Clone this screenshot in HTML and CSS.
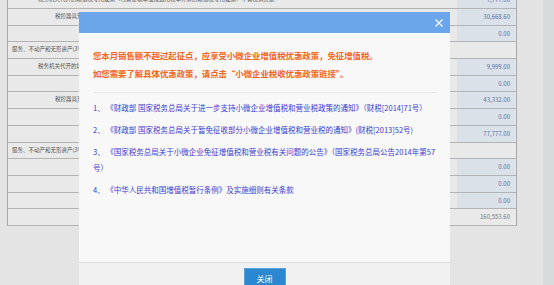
FILE: index.html
```html
<!DOCTYPE html>
<html lang="zh-CN">
<head>
    <meta charset="UTF-8">
    <title>小微企业优惠提示</title>
    <link rel="stylesheet" href="styles.css">
</head>
<body>

<div class="page">
    <div class="form-area">
        <div class="sheet">
            <div class="row"><div class="label wide lv2">税务机关代开的增值税专用发票（包含征收率或按适用税率计算的增值税专用发票）不含税销售额</div><div class="value"><span>7,777.00</span></div></div>
            <div class="row"><div class="label lv3">税控器具开具的普通发票不含税销售额</div><div class="value"><span>30,668.60</span></div></div>
            <div class="row"><div class="label"></div><div class="value"><span>0.00</span></div></div>
            <div class="row"><div class="label lv1">服务、不动产和无形资产(3%征收率)</div><div class="value empty"></div></div>
            <div class="row"><div class="label lv2">税务机关代开的增值税专用发票不含税销售额</div><div class="value"><span>9,999.00</span></div></div>
            <div class="row"><div class="label"></div><div class="value"><span>0.00</span></div></div>
            <div class="row"><div class="label lv3">税控器具开具的普通发票不含税销售额</div><div class="value"><span>43,332.00</span></div></div>
            <div class="row"><div class="label"></div><div class="value"><span>0.00</span></div></div>
            <div class="row"><div class="label"></div><div class="value"><span>77,777.00</span></div></div>
            <div class="row"><div class="label lv1">服务、不动产和无形资产(3%征收率)</div><div class="value empty"></div></div>
            <div class="row"><div class="label"></div><div class="value"><span>0.00</span></div></div>
            <div class="row"><div class="label"></div><div class="value"><span>0.00</span></div></div>
            <div class="row"><div class="label"></div><div class="value"><span>0.00</span></div></div>
            <div class="row total"><div class="label"></div><div class="value empty">160,553.60</div></div>
        </div>
    </div>
    <div class="side"></div>
    <div class="scrollbar"></div>
</div>

<!-- 提示弹窗 -->
<div class="dialog">
    <div class="dialog-head">
        <span class="dialog-close">
            <svg width="8" height="8" viewBox="0 0 8 8"><path d="M0.5 0.5 L7.5 7.5 M7.5 0.5 L0.5 7.5" stroke="#fff" stroke-width="1.1" fill="none"/></svg>
        </span>
    </div>
    <div class="dialog-body">
        <p class="notice">您本月销售额不超过起征点，应享受小微企业增值税优惠政策，免征增值税。</p>
        <p class="notice">如您需要了解具体优惠政策，请点击“小微企业税收优惠政策链接”。</p>
        <div class="divider"></div>
        <ul class="links">
            <li>1、 《财政部 国家税务总局关于进一步支持小微企业增值税和营业税政策的通知》（财税[2014]71号）</li>
            <li>2、 《财政部 国家税务总局关于暂免征收部分小微企业增值税和营业税的通知》(财税[2013]52号)</li>
            <li>3、 《国家税务总局关于小微企业免征增值税和营业税有关问题的公告》（国家税务总局公告2014年第57<br>号）</li>
            <li>4、 《中华人民共和国增值税暂行条例》及实施细则有关条款</li>
        </ul>
    </div>
    <div class="dialog-foot">
        <button class="btn-close">关闭</button>
    </div>
</div>

</body>
</html>
```

FILE: styles.css
```css
body {
    margin: 0;
    padding: 0;
    width: 554px;
    height: 285px;
    overflow: hidden;
    background-color: #e4e4e4;
    font-family: "Noto Sans CJK SC", "Liberation Sans", sans-serif;
}

.page {
    display: flex;
    height: 285px;
}

.form-area {
    width: 510px;
    margin-left: 7px;
}

.sheet {
    margin-top: -7.7px;
    border-left: 1px solid #a9a9a9;
    border-right: 1px solid #a9a9a9;
    background-color: #e9e9e9;
}

.row {
    display: flex;
    height: 16.7px;
    box-sizing: border-box;
    border-bottom: 1px solid #b3b3b3;
}

/* 标签列在弹窗下方被遮住，只保留可见部分 */
.label {
    width: 71px;
    box-sizing: border-box;
    flex-shrink: 0;
    font-size: 5.5px;
    line-height: 15.7px;
    color: #555;
    white-space: nowrap;
    overflow: hidden;
}

.label.wide {
    width: auto;
    flex-shrink: 1;
}

.lv1 {
    padding-left: 4px;
}

.lv2 {
    padding-left: 30px;
}

.lv3 {
    padding-left: 47px;
}

.value {
    width: 67px;
    margin-left: auto;
    flex-shrink: 0;
    padding: 0 1px 0 8px;
    box-sizing: border-box;
    display: flex;
}

.value span {
    flex-grow: 1;
    background-color: #dbe1e8;
    font-size: 6px;
    line-height: 15.7px;
    text-align: right;
    padding-right: 5px;
    color: #5470ad;
}

.value.empty {
    display: block;
    font-size: 6px;
    line-height: 15.7px;
    text-align: right;
    padding-right: 6px;
    color: #777;
}

.side {
    width: 26px;
    background-color: #e3e3e3;
}

.scrollbar {
    flex-grow: 1;
    background-color: #d7dbdb;
}

/* 弹窗 */
.dialog {
    position: absolute;
    left: 79px;
    top: 12px;
    width: 371px;
    background-color: #f8f8f8;
}

.dialog-head {
    height: 21px;
    background-color: #6ca6ea;
    display: flex;
    justify-content: flex-end;
    align-items: center;
    padding-right: 7px;
}

.dialog-close {
    display: flex;
}

.dialog-body {
    height: 229px;
    box-sizing: border-box;
    padding: 13px 13px 0 14px;
}

.notice {
    margin: 0;
    font-size: 8.4px;
    font-weight: bold;
    line-height: 18px;
    color: #f4651c;
}

.divider {
    margin-top: 10px;
    border-top: 1px solid #ebebeb;
}

.links {
    list-style: none;
    margin: 0 -5px 0 0;
    padding: 7px 0 0 0;
}

.links li {
    font-size: 7.5px;
    line-height: 16px;
    margin-bottom: 6px;
    color: #3a3ad2;
}

.dialog-foot {
    height: 60px;
    border-top: 1px solid #dadada;
    background-color: #f1f1f1;
    display: flex;
    justify-content: center;
    padding-top: 5px;
    box-sizing: border-box;
}

.btn-close {
    width: 42px;
    height: 20px;
    background-color: #2b87cf;
    border: 1px solid #5aa0d8;
    color: white;
    font-family: "Noto Sans CJK SC", sans-serif;
    font-size: 8px;
    padding: 0;
    cursor: pointer;
}
```
